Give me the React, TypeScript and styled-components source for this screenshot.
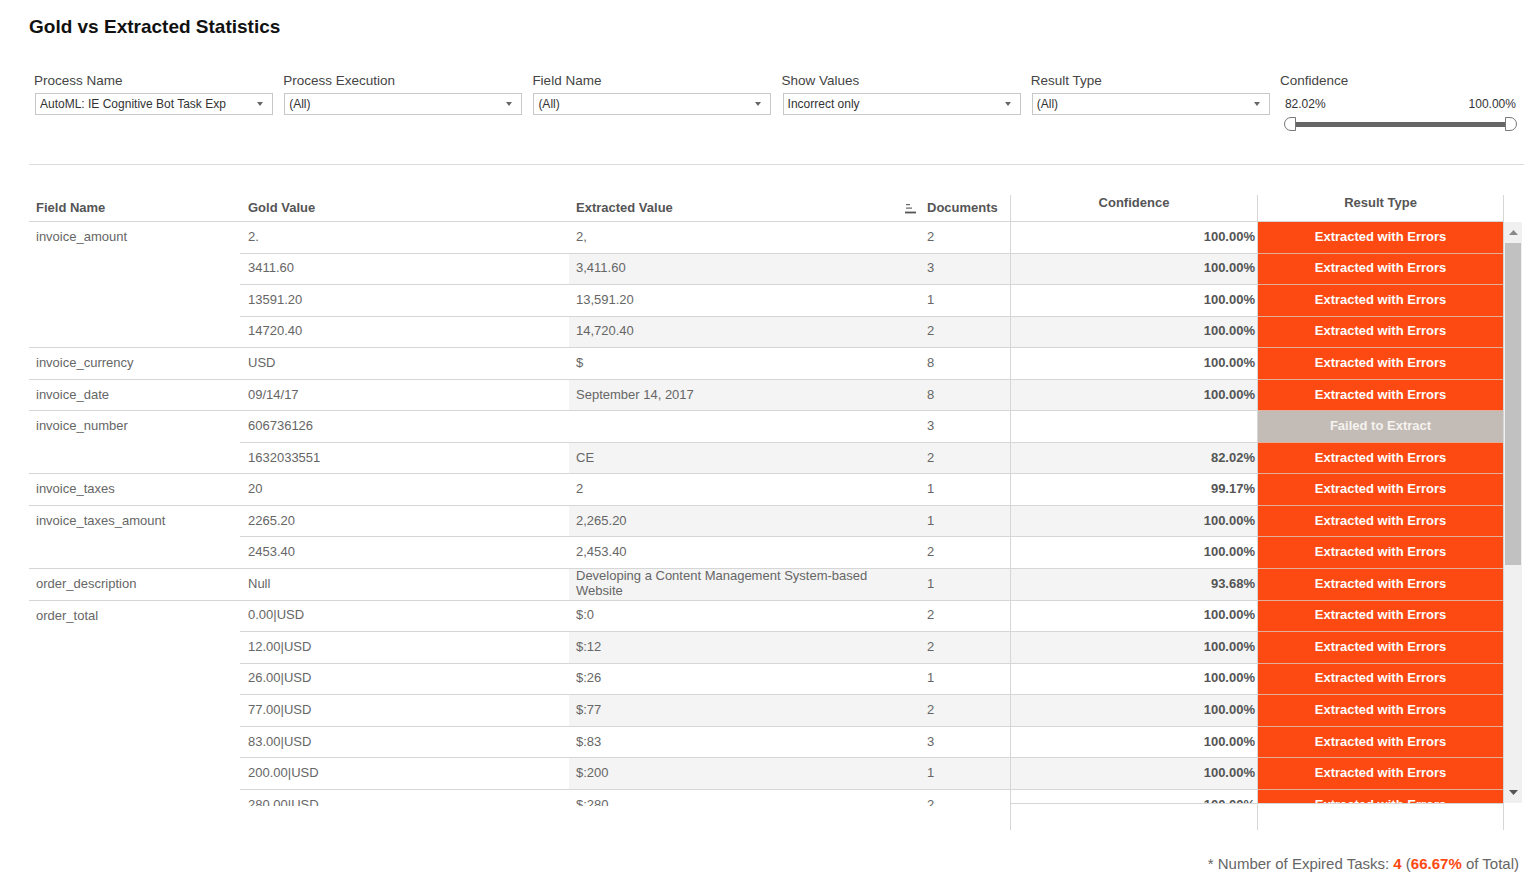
import React from 'react';
import styled, { createGlobalStyle } from 'styled-components';

const ORANGE = '#fd4a12';
const LINE = '#d6d6d6';
const ROW = 31.55;

const GlobalStyle = createGlobalStyle`
  html, body { margin: 0; padding: 0; background: #fff; }
  body { font-family: "Liberation Sans", Arial, Helvetica, sans-serif; }
`;

const Page = styled.div`
  width: 1537px;
  height: 885px;
  box-sizing: border-box;
  padding: 16px 13px 0 29px;
  overflow: hidden;
`;

const Title = styled.h1`
  margin: 0;
  font-size: 19px;
  line-height: 22px;
  font-weight: bold;
  color: #111;
`;

const Filters = styled.div`
  display: grid;
  grid-template-columns: repeat(5, 249.2px) 1fr;
  margin: 35px 0 0 5px;
`;

const FilterGroup = styled.div`
  display: flex;
  flex-direction: column;
`;

const FilterLabel = styled.div`
  font-size: 13.5px;
  line-height: 16px;
  height: 16px;
  color: #444;
  white-space: nowrap;
`;

const Dropdown = styled.div`
  margin: 4px 0 0 1px;
  width: 238px;
  height: 22px;
  box-sizing: border-box;
  border: 1px solid #c8c8c8;
  display: flex;
  align-items: center;
  justify-content: space-between;
  padding: 0 9px 0 4px;
  font-size: 12px;
  color: #333;
  white-space: nowrap;
`;

const Caret = styled.span`
  width: 0;
  height: 0;
  border-left: 3.5px solid transparent;
  border-right: 3.5px solid transparent;
  border-top: 4px solid #666;
`;

const RangeValues = styled.div`
  margin-top: 4px;
  width: 236px;
  height: 22px;
  box-sizing: border-box;
  padding-left: 5px;
  display: flex;
  align-items: center;
  justify-content: space-between;
  font-size: 12px;
  color: #333;
`;

const Slider = styled.div`
  display: flex;
  align-items: center;
  width: 233px;
  height: 14px;
  margin: 2px 0 0 4px;
`;

const Handle = styled.div<{ $side: 'left' | 'right' }>`
  flex: none;
  width: 12px;
  height: 14px;
  box-sizing: border-box;
  border: 1px solid #777;
  background: #fff;
  border-radius: ${(p) => (p.$side === 'left' ? '7px 0 0 7px' : '0 7px 7px 0')};
`;

const Track = styled.div`
  flex: 1;
  height: 5px;
  background: #666;
`;

const Divider = styled.div`
  margin-top: 33px;
  height: 1px;
  background: #dcdcdc;
`;

const Table = styled.div`
  margin-top: 30px;
  display: flex;
  height: 635px;
  width: 1493px;
`;

const Pane = styled.div<{ $w: number }>`
  flex: none;
  width: ${(p) => p.$w}px;
  box-sizing: border-box;
  border-right: 1px solid ${LINE};
  display: flex;
  flex-direction: column;
`;

const HeaderRow = styled.div<{ $center?: boolean }>`
  height: 27px;
  box-sizing: border-box;
  border-bottom: 1px solid ${LINE};
  display: flex;
  align-items: flex-end;
  justify-content: ${(p) => (p.$center ? 'center' : 'flex-start')};
  padding-bottom: ${(p) => (p.$center ? '11px' : '6px')};
  font-size: 13px;
  line-height: 15px;
  font-weight: bold;
  color: #555;
`;

const HeadCell = styled.div<{ $w?: number; $pl: number }>`
  ${(p) => (p.$w ? `width: ${p.$w}px; flex: none;` : 'flex: 1;')}
  box-sizing: border-box;
  padding-left: ${(p) => p.$pl}px;
  display: flex;
  align-items: flex-end;
  white-space: nowrap;
`;

const SortIcon = styled.svg`
  width: 12px;
  height: 12px;
  margin: 0 10px 1px 0;
  flex: none;
`;

const Body = styled.div<{ $h: number; $bottom?: boolean }>`
  height: ${(p) => p.$h}px;
  box-sizing: border-box;
  overflow: hidden;
  border-bottom: ${(p) => (p.$bottom ? `1px solid ${LINE}` : 'none')};
`;

const Group = styled.div`
  display: flex;
  border-bottom: 1px solid ${LINE};
`;

const FieldCell = styled.div`
  width: 211px;
  flex: none;
  box-sizing: border-box;
  padding: 7px 0 0 7px;
  font-size: 13px;
  line-height: 15px;
  color: #666;
`;

const SubRows = styled.div`
  flex: 1;
  display: flex;
  flex-direction: column;
`;

const SubRow = styled.div`
  height: ${ROW}px;
  box-sizing: border-box;
  display: flex;
  &:not(:last-child) {
    border-bottom: 1px solid ${LINE};
  }
  &:last-child {
    height: ${ROW - 1}px;
  }
`;

const Cell = styled.div<{ $w?: number; $pl: number }>`
  ${(p) => (p.$w ? `width: ${p.$w}px; flex: none;` : 'flex: 1;')}
  box-sizing: border-box;
  padding: 0 6px 2px ${(p) => p.$pl}px;
  display: flex;
  align-items: center;
  font-size: 13px;
  line-height: 15px;
  color: #666;
`;

const Band = styled.div<{ $shade: boolean }>`
  flex: 1;
  display: flex;
  background: ${(p) => (p.$shade ? '#f4f4f4' : 'transparent')};
`;

const ConfRow = styled.div<{ $shade: boolean }>`
  height: ${ROW}px;
  box-sizing: border-box;
  border-bottom: 1px solid ${LINE};
  background: ${(p) => (p.$shade ? '#f4f4f4' : '#fff')};
  display: flex;
  align-items: center;
  justify-content: flex-end;
  padding: 0 2px 2px 0;
  font-size: 13px;
  font-weight: bold;
  color: #555;
`;

const ResultCell = styled.div<{ $failed: boolean }>`
  height: ${ROW}px;
  box-sizing: border-box;
  border-bottom: 1px solid #e4ad98;
  background: ${(p) => (p.$failed ? '#c3bcb6' : ORANGE)};
  color: ${(p) => (p.$failed ? '#f5f2ef' : '#fff')};
  display: flex;
  align-items: center;
  justify-content: center;
  padding-bottom: 2px;
  font-size: 13px;
  font-weight: bold;
`;

const Scrollbar = styled.div`
  flex: none;
  width: 18px;
  margin-top: 27px;
  height: 581px;
  background: #f0f0f0;
  display: flex;
  flex-direction: column;
`;

const ScrollArrow = styled.div`
  height: 21px;
  display: flex;
  align-items: center;
  justify-content: center;
`;

const Thumb = styled.div`
  height: 322px;
  margin: 0 1px;
  background: #c1c1c1;
`;

const ScrollSpacer = styled.div`
  flex: 1;
`;

const Footer = styled.div`
  margin-top: 26px;
  padding-right: 5px;
  text-align: right;
  font-size: 15px;
  line-height: 16px;
  color: #666;
`;

const Accent = styled.b`
  color: ${ORANGE};
`;

type Row = { gold: string; ext: string; docs: string; conf: string; failed?: boolean };
type G = { field: string; rows: Row[] };

const groups: G[] = [
  {
    field: 'invoice_amount',
    rows: [
      { gold: '2.', ext: '2,', docs: '2', conf: '100.00%' },
      { gold: '3411.60', ext: '3,411.60', docs: '3', conf: '100.00%' },
      { gold: '13591.20', ext: '13,591.20', docs: '1', conf: '100.00%' },
      { gold: '14720.40', ext: '14,720.40', docs: '2', conf: '100.00%' },
    ],
  },
  { field: 'invoice_currency', rows: [{ gold: 'USD', ext: '$', docs: '8', conf: '100.00%' }] },
  { field: 'invoice_date', rows: [{ gold: '09/14/17', ext: 'September 14, 2017', docs: '8', conf: '100.00%' }] },
  {
    field: 'invoice_number',
    rows: [
      { gold: '606736126', ext: '', docs: '3', conf: '', failed: true },
      { gold: '1632033551', ext: 'CE', docs: '2', conf: '82.02%' },
    ],
  },
  { field: 'invoice_taxes', rows: [{ gold: '20', ext: '2', docs: '1', conf: '99.17%' }] },
  {
    field: 'invoice_taxes_amount',
    rows: [
      { gold: '2265.20', ext: '2,265.20', docs: '1', conf: '100.00%' },
      { gold: '2453.40', ext: '2,453.40', docs: '2', conf: '100.00%' },
    ],
  },
  {
    field: 'order_description',
    rows: [{ gold: 'Null', ext: 'Developing a Content Management System-based Website', docs: '1', conf: '93.68%' }],
  },
  {
    field: 'order_total',
    rows: [
      { gold: '0.00|USD', ext: '$:0', docs: '2', conf: '100.00%' },
      { gold: '12.00|USD', ext: '$:12', docs: '2', conf: '100.00%' },
      { gold: '26.00|USD', ext: '$:26', docs: '1', conf: '100.00%' },
      { gold: '77.00|USD', ext: '$:77', docs: '2', conf: '100.00%' },
      { gold: '83.00|USD', ext: '$:83', docs: '3', conf: '100.00%' },
      { gold: '200.00|USD', ext: '$:200', docs: '1', conf: '100.00%' },
      { gold: '280.00|USD', ext: '$:280', docs: '2', conf: '100.00%' },
      { gold: '310.00|USD', ext: '$:310', docs: '1', conf: '100.00%' },
    ],
  },
];

const flat: Row[] = groups.flatMap((g) => g.rows);

const filters = [
  { label: 'Process Name', value: 'AutoML: IE Cognitive Bot Task Exp' },
  { label: 'Process Execution', value: '(All)' },
  { label: 'Field Name', value: '(All)' },
  { label: 'Show Values', value: 'Incorrect only' },
  { label: 'Result Type', value: '(All)' },
];

export default function App() {
  let idx = 0;
  return (
    <Page>
      <GlobalStyle />
      <Title>Gold vs Extracted Statistics</Title>
      <Filters>
        {filters.map((f) => (
          <FilterGroup key={f.label}>
            <FilterLabel>{f.label}</FilterLabel>
            <Dropdown>
              <span>{f.value}</span>
              <Caret />
            </Dropdown>
          </FilterGroup>
        ))}
        <FilterGroup>
          <FilterLabel>Confidence</FilterLabel>
          <RangeValues>
            <span>82.02%</span>
            <span>100.00%</span>
          </RangeValues>
          <Slider>
            <Handle $side="left" />
            <Track />
            <Handle $side="right" />
          </Slider>
        </FilterGroup>
      </Filters>
      <Divider />
      <Table>
        <Pane $w={982}>
          <HeaderRow>
            <HeadCell $w={211} $pl={7}>Field Name</HeadCell>
            <HeadCell $w={329} $pl={8}>Gold Value</HeadCell>
            <HeadCell $w={336} $pl={7}>Extracted Value</HeadCell>
            <HeadCell $pl={0}>
              <SortIcon viewBox="0 0 12 12">
                <rect x="1" y="2" width="4" height="1.2" fill="#666" />
                <rect x="1" y="5.5" width="6" height="1.2" fill="#666" />
                <rect x="0" y="9.6" width="11" height="1.8" fill="#555" />
              </SortIcon>
              Documents
            </HeadCell>
          </HeaderRow>
          <Body $h={584}>
            {groups.map((g) => (
              <Group key={g.field}>
                <FieldCell>{g.field}</FieldCell>
                <SubRows>
                  {g.rows.map((r) => {
                    const i = idx++;
                    return (
                      <SubRow key={i}>
                        <Cell $w={329} $pl={8}>{r.gold}</Cell>
                        <Band $shade={i % 2 === 1}>
                          <Cell $w={336} $pl={7}>{r.ext}</Cell>
                          <Cell $pl={22}>{r.docs}</Cell>
                        </Band>
                      </SubRow>
                    );
                  })}
                </SubRows>
              </Group>
            ))}
          </Body>
        </Pane>
        <Pane $w={247}>
          <HeaderRow $center>Confidence</HeaderRow>
          <Body $h={582} $bottom>
            {flat.map((r, i) => (
              <ConfRow key={i} $shade={i % 2 === 1}>{r.conf}</ConfRow>
            ))}
          </Body>
        </Pane>
        <Pane $w={246}>
          <HeaderRow $center>Result Type</HeaderRow>
          <Body $h={582} $bottom>
            {flat.map((r, i) => (
              <ResultCell key={i} $failed={!!r.failed}>
                {r.failed ? 'Failed to Extract' : 'Extracted with Errors'}
              </ResultCell>
            ))}
          </Body>
        </Pane>
        <Scrollbar>
          <ScrollArrow>
            <svg width="9" height="5" viewBox="0 0 9 5">
              <polygon points="0,5 9,5 4.5,0" fill="#888" />
            </svg>
          </ScrollArrow>
          <Thumb />
          <ScrollSpacer />
          <ScrollArrow>
            <svg width="9" height="5" viewBox="0 0 9 5">
              <polygon points="0,0 9,0 4.5,5" fill="#555" />
            </svg>
          </ScrollArrow>
        </Scrollbar>
      </Table>
      <Footer>
        * Number of Expired Tasks: <Accent>4</Accent> (<Accent>66.67%</Accent> of Total)
      </Footer>
    </Page>
  );
}
